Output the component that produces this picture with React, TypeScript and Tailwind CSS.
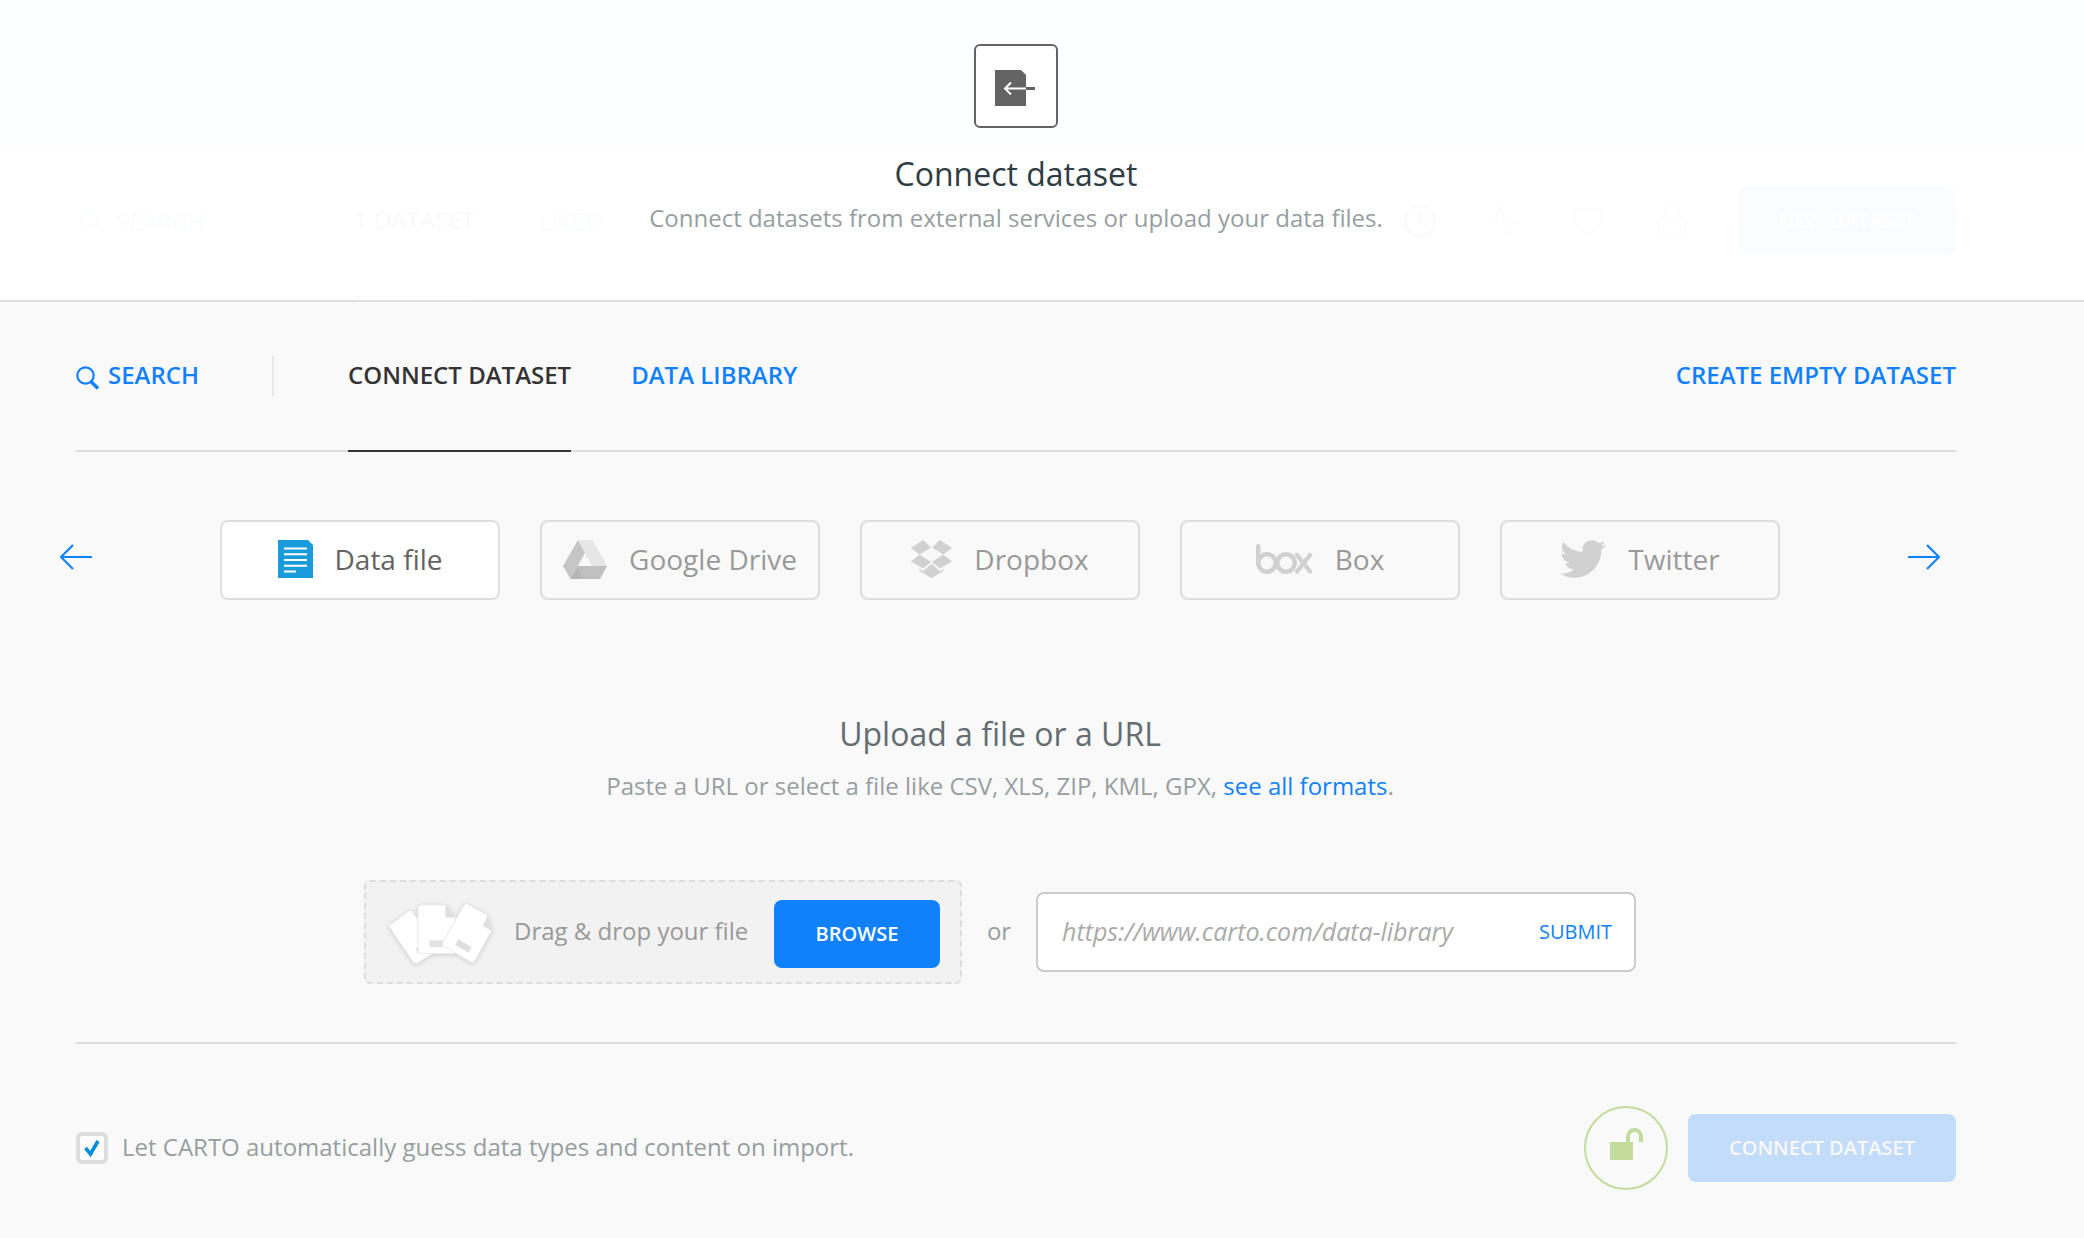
import React, { useState } from 'react';
import { Activity, Clock, Heart, Lock } from 'lucide-react';
import { FaTwitter } from 'react-icons/fa';

function ImportIcon() {
  return (
    <svg width="42" height="38" viewBox="0 0 42 38" fill="none" aria-hidden="true">
      <path d="M0 1h26l5 5v31H0z" fill="#636363" />
      <path d="M31 19.500h9" stroke="#636363" strokeWidth="3" />
      <path d="M10 19.500h21M16 13.500l-6 6 6 6" stroke="#fff" strokeWidth="2" />
    </svg>
  );
}

function SearchIcon({ className }: { className?: string }) {
  return (
    <svg width="24" height="24" viewBox="0 0 24 24" fill="none" stroke="currentColor" className={className} aria-hidden="true">
      <circle cx="9.500" cy="9.500" r="8.200" strokeWidth="2.200" />
      <path d="M15 15.500l7 7" strokeWidth="3.600" />
    </svg>
  );
}

function ArrowIcon({ className }: { className?: string }) {
  return (
    <svg width="34" height="26" viewBox="0 0 34 26" fill="none" stroke="currentColor" strokeWidth="2.200" className={className} aria-hidden="true">
      <path d="M32 13H1M13 1L1 13l12 12" />
    </svg>
  );
}

function DataFileIcon() {
  return (
    <svg width="35" height="38" viewBox="0 0 35 38" fill="none" aria-hidden="true">
      <path d="M0 0h30l5 5v33H0z" fill="#1a9bdc" />
      <path d="M6 8.500h23M6 14.300h23M6 20h23M6 25.800h23M6 31.500h12" stroke="#fff" strokeWidth="2" />
    </svg>
  );
}

function DriveIcon() {
  return (
    <svg width="44" height="39" viewBox="0 0 44 39" aria-hidden="true">
      <path d="M15 0h14.500L44 26H29z" fill="#e6e6e6" />
      <path d="M15 0l7 13L7.500 39 0 26z" fill="#c6c6c6" />
      <path d="M15 26h29l-7 13H7.500z" fill="#c0c0c0" />
      <path d="M15 26l4 13H7.500z" fill="#b6b6b6" />
    </svg>
  );
}

function DropboxIcon() {
  return (
    <svg width="41" height="38" viewBox="0 0 41 38" fill="#d1d1d1" aria-hidden="true">
      <path d="M0 8L12 0l8 7.500-11.300 7zM41 8L29 0l-8 7.500 11.300 7zM0 21.500l8.700-7L20 22l-8 6.500zM41 21.500l-8.700-7L21 22l8 6.500z" />
      <path d="M8.500 29l3.500 2.200 8.500-7.500 8.500 7.500 3.500-2.200v2L20.500 38l-12-7z" />
    </svg>
  );
}

function BoxIcon() {
  return (
    <svg width="57" height="30" viewBox="0 0 57 30" fill="none" stroke="#d1d1d1" strokeWidth="4.400" strokeLinecap="round" aria-hidden="true">
      <path d="M2.200 2.200V19" />
      <circle cx="11" cy="19" r="8.700" />
      <circle cx="30" cy="19" r="8.700" />
      <path d="M41 11l13 16.500M54 11L41 27.500" />
    </svg>
  );
}

function FilesIcon() {
  return (
    <svg width="108" height="69" viewBox="-2 -2 112 72" aria-hidden="true" className="mt-1.5 drop-shadow-sm">
      <g stroke="#e6e6e6" strokeWidth="1" strokeLinejoin="round">
        <path d="M3 22L22 8q2-1 3 1l28 40-23 14q-3 1-4-1L1 25q-1-2 2-3z" fill="#fff" />
        <path d="M29 47l5-2v6l-4 1z" fill="#dedede" stroke="none" />
        <path d="M34 2h26l10 13v38H34q-3 0-3-3V5q0-3 3-3z" fill="#fff" />
        <path d="M60 2l10 13H60z" fill="#dedede" />
        <path d="M43 39h14v7H43z" fill="#e2e2e2" stroke="none" />
        <path d="M83 1l21 12 4 16-18 32q-1 2-4 1L58 45q-3-2-1-4L79 2q2-2 4-1z" fill="#fff" />
        <path d="M104 13l4 16-9-5z" fill="#dedede" />
        <path d="M73 38l14 8-3 6-14-8z" fill="#dedede" stroke="none" />
      </g>
    </svg>
  );
}

function UnlockIcon() {
  return (
    <svg width="34" height="32" viewBox="0 0 34 32" fill="none" aria-hidden="true">
      <path d="M1 14h23v18H1z" fill="#c3db9c" />
      <path d="M19 15V8.500a6.500 6.500 0 0 1 13 0V14" stroke="#c3db9c" strokeWidth="4" />
    </svg>
  );
}

const services = [
  { name: 'Data file', icon: <DataFileIcon /> },
  { name: 'Google Drive', icon: <DriveIcon /> },
  { name: 'Dropbox', icon: <DropboxIcon /> },
  { name: 'Box', icon: <BoxIcon /> },
  { name: 'Twitter', icon: <FaTwitter size={46} color="#d1d1d1" className="-my-1" /> },
];

/* Dashboard toolbar showing faintly through the dialog header */
function FadedToolbar() {
  return (
    <div aria-hidden="true" className="absolute inset-0 pr-[52px]">
      <div className="max-w-[1880px] h-full mx-auto pt-36 pb-0.5 flex items-stretch text-2xl text-[#fafdff]">
        <div className="w-[278px] flex items-center gap-3 pl-1">
          <SearchIcon />
          <span>SEARCH</span>
        </div>
        <div className="flex items-center border-b-2 border-[#fafafa] text-[#fafafa]">1 DATASET</div>
        <div className="flex items-center pl-16">LIKED</div>
        <div className="ml-auto flex items-center gap-12 pr-12 text-[#fdfdfd]">
          <Clock size={36} className="text-[#fbfbfb]" />
          <Activity size={36} />
          <Heart size={36} />
          <Lock size={36} />
        </div>
        <div className="self-center w-[218px] h-[68px] rounded-lg flex items-center justify-center text-xl font-semibold text-white bg-linear-to-b from-[#fbfcff] from-50% to-[#f9fdff] to-50%">
          NEW DATASET
        </div>
      </div>
    </div>
  );
}

function Header() {
  return (
    <header className="relative h-[302px] bg-white border-b-2 border-[#ddd]">
      <div className="absolute inset-x-0 top-0 h-[147px] bg-[#fdfeff]"></div>
      <FadedToolbar />
      <div className="relative pt-11 pr-[52px] flex flex-col items-center">
        <div className="w-21 h-21 pt-1 flex items-center justify-center bg-white border-2 border-[#636363] rounded-md">
          <ImportIcon />
        </div>
        <h1 className="mt-6 text-[32px] leading-11 text-[#2e3c43]">Connect dataset</h1>
        <p className="mt-0.5 text-2xl leading-10 text-[#979ea1]">
          Connect datasets from external services or upload your data files.
        </p>
      </div>
    </header>
  );
}

export default function App() {
  const [selected, setSelected] = useState('Data file');
  const [guess, setGuess] = useState(true);

  return (
    <div className="min-h-screen bg-[#f9f9f9] font-['Open_Sans',sans-serif]">
      <Header />

      <main className="pr-[52px]">
        <div className="max-w-[1880px] mx-auto">
          {/* Tabs */}
          <nav className="h-[150px] flex items-stretch border-b-2 border-[#ddd] text-2xl font-semibold text-[#1181fb]">
            <button type="button" className="pb-0.5 flex items-center gap-2">
              <SearchIcon className="mt-1.5" />
              SEARCH
            </button>
            <span className="self-center w-[2px] h-10 ml-[73px] mr-[74px] bg-[#e8e8e8]"></span>
            <button type="button" className="-mb-[2px] pb-0.5 border-b-2 border-[#333] text-[#333]">CONNECT DATASET</button>
            <button type="button" className="ml-15 pb-0.5">DATA LIBRARY</button>
            <button type="button" className="ml-auto pb-0.5">CREATE EMPTY DATASET</button>
          </nav>

          <div className="-ml-4 mr-4">
            {/* Services */}
            <div className="pt-17 flex items-center justify-between text-[#1181fb]">
              <button type="button" aria-label="Previous" className="pb-1.5">
                <ArrowIcon />
              </button>
              <div className="flex gap-10">
                {services.map(({ name, icon }) => (
                  <button
                    key={name}
                    type="button"
                    onClick={() => setSelected(name)}
                    className={`w-[280px] h-20 pb-0.5 flex items-center justify-center gap-[22px] border-2 border-[#ddd] rounded-lg text-[28px] ${
                      selected === name ? 'bg-white text-[#636363]' : 'text-[#999]'
                    }`}
                  >
                    {icon}
                    <span>{name}</span>
                  </button>
                ))}
              </div>
              <button type="button" aria-label="Next" className="pb-1.5">
                <ArrowIcon className="rotate-180" />
              </button>
            </div>

            {/* Upload */}
            <div className="pt-28 text-center">
              <h2 className="text-[32px] leading-11 text-[#636d72]">Upload a file or a URL</h2>
              <p className="mt-2.5 text-2xl leading-10 text-[#979ea1]">
                Paste a URL or select a file like CSV, XLS, ZIP, KML, GPX,{' '}
                <a href="#formats" className="text-[#1181fb]">see all formats</a>.
              </p>
            </div>

            <div className="pt-[74px] pb-[58px] flex items-center justify-center">
              <div className="w-[598px] h-26 px-5 flex items-center bg-[#f2f2f2] border-2 border-dashed border-[#ddd] rounded-md">
                <FilesIcon />
                <span className="ml-5 pb-0.5 text-2xl text-[#999]">Drag &amp; drop your file</span>
                <button type="button" className="mt-1 ml-auto w-[166px] h-17 rounded-lg bg-[#1181fb] text-xl font-semibold text-white">
                  BROWSE
                </button>
              </div>
              <span className="w-[74px] pb-0.5 text-center text-2xl text-[#979ea1]">or</span>
              <form className="w-[600px] h-20 pl-6 pr-[22px] flex items-center bg-white border-2 border-[#ccc] rounded-lg">
                <input
                  type="text"
                  aria-label="File URL"
                  placeholder="https://www.carto.com/data-library"
                  className="flex-1 min-w-0 text-[25px] italic outline-none placeholder:text-[#aaa]"
                />
                <button type="button" className="text-xl text-[#1181fb]">SUBMIT</button>
              </form>
            </div>
          </div>

          {/* Footer */}
          <footer className="pt-[62px] pb-11 flex items-center border-t-2 border-[#ddd]">
            <label className="flex items-center gap-3.5 text-2xl text-[#979ea1]">
              <span className="relative flex">
                <input
                  type="checkbox"
                  checked={guess}
                  onChange={(e) => setGuess(e.target.checked)}
                  className="appearance-none w-8 h-8 bg-white border-4 border-[#ddd] rounded-md"
                />
                {guess && (
                  <svg viewBox="0 0 32 32" fill="none" className="absolute inset-0 pointer-events-none" aria-hidden="true">
                    <path d="M9.500 16l5 6 7.500-13" stroke="#0090db" strokeWidth="3.600" />
                  </svg>
                )}
              </span>
              <span className="pb-0.5">Let CARTO automatically guess data types and content on import.</span>
            </label>
            <button type="button" aria-label="Public" className="ml-auto w-21 h-21 pb-2 flex items-center justify-center rounded-full border-2 border-[#c3db9c]">
              <UnlockIcon />
            </button>
            <button type="button" className="ml-5 w-[268px] h-17 rounded-lg bg-[#c3dcfa] text-xl font-semibold text-[#f9f9f9]">
              CONNECT DATASET
            </button>
          </footer>
        </div>
      </main>
    </div>
  );
}
